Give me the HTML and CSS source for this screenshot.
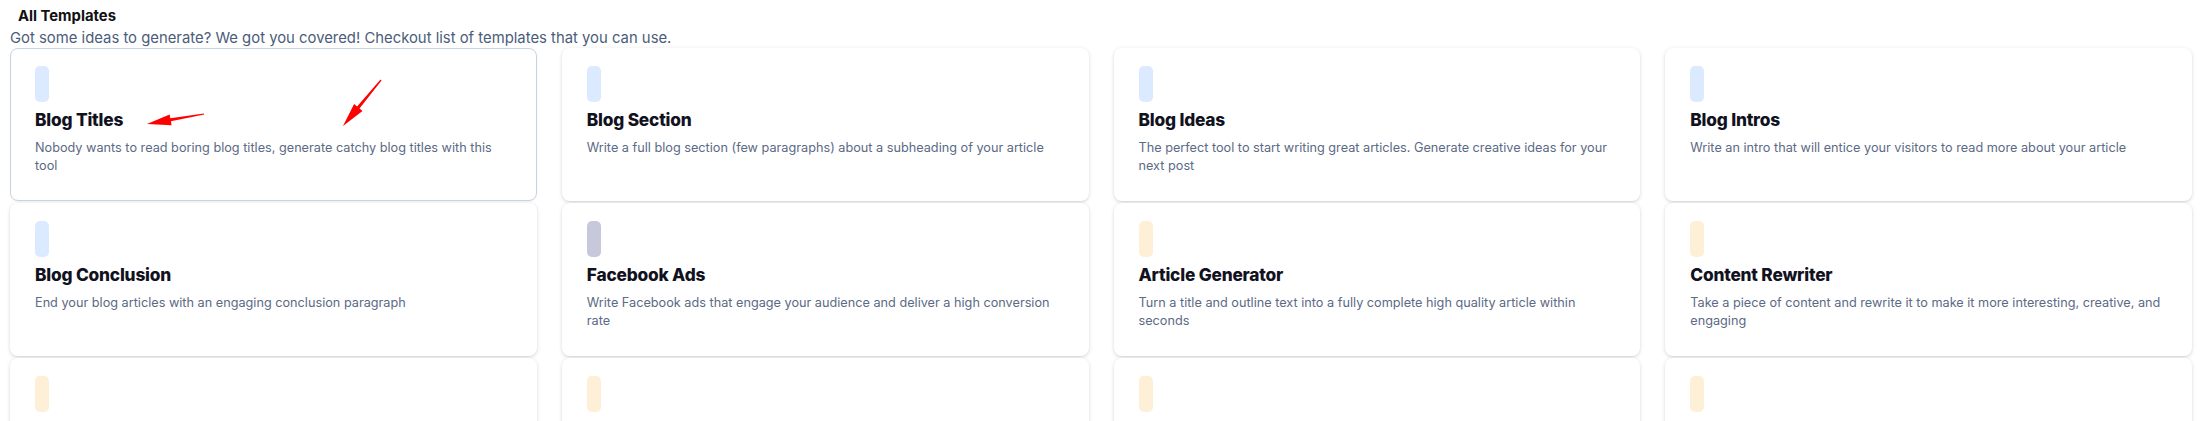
FILE: index.html
```html
<!DOCTYPE html>
<html lang="en">
<head>
  <meta charset="UTF-8">
  <meta name="viewport" content="width=device-width, initial-scale=1.0">
  <title>All Templates</title>
  <link rel="stylesheet" href="styles.css">
</head>
<body>
  <div class="templates-page">
    <h2 class="page-title">All Templates</h2>
    <p class="page-subtitle">Got some ideas to generate? We got you covered! Checkout list of templates that you can use.</p>

    <div class="template-grid">
      <a class="template-card active" href="#">
        <span class="template-icon blue"></span>
        <h3>Blog Titles</h3>
        <p>Nobody wants to read boring blog titles, generate catchy blog titles with this tool</p>
        <!-- annotation arrows -->
        <svg class="annotation" width="400" height="120" viewBox="0 0 400 120">
          <polygon points="193.9,65.4 160.3,70.3 159.6,66.4 137,76 161.6,77.2 160.9,73.3 194.1,66.6" />
          <polygon points="371.5,32.4 349.5,60.5 352.5,63.0 333,78 344.1,56.0 347.1,58.5 370.5,31.6" />
        </svg>
      </a>
      <a class="template-card" href="#">
        <span class="template-icon blue"></span>
        <h3>Blog Section</h3>
        <p>Write a full blog section (few paragraphs) about a subheading of your article</p>
      </a>
      <a class="template-card" href="#">
        <span class="template-icon blue"></span>
        <h3>Blog Ideas</h3>
        <p>The perfect tool to start writing great articles. Generate creative ideas for your next post</p>
      </a>
      <a class="template-card" href="#">
        <span class="template-icon blue"></span>
        <h3>Blog Intros</h3>
        <p>Write an intro that will entice your visitors to read more about your article</p>
      </a>

      <a class="template-card" href="#">
        <span class="template-icon blue"></span>
        <h3>Blog Conclusion</h3>
        <p>End your blog articles with an engaging conclusion paragraph</p>
      </a>
      <a class="template-card" href="#">
        <span class="template-icon slate"></span>
        <h3>Facebook Ads</h3>
        <p>Write Facebook ads that engage your audience and deliver a high conversion rate</p>
      </a>
      <a class="template-card" href="#">
        <span class="template-icon amber"></span>
        <h3>Article Generator</h3>
        <p>Turn a title and outline text into a fully complete high quality article within seconds</p>
      </a>
      <a class="template-card" href="#">
        <span class="template-icon amber"></span>
        <h3>Content Rewriter</h3>
        <p>Take a piece of content and rewrite it to make it more interesting, creative, and engaging</p>
      </a>

      <a class="template-card" href="#">
        <span class="template-icon amber"></span>
        <h3>Paragraph Writer</h3>
        <p>Generate paragraphs that will captivate your readers</p>
      </a>
      <a class="template-card" href="#">
        <span class="template-icon amber"></span>
        <h3>Content Summarizer</h3>
        <p>Get the key points from a piece of content</p>
      </a>
      <a class="template-card" href="#">
        <span class="template-icon amber"></span>
        <h3>Product Description</h3>
        <p>Create compelling product descriptions that sell</p>
      </a>
      <a class="template-card" href="#">
        <span class="template-icon amber"></span>
        <h3>Sentence Expander</h3>
        <p>Expand a short sentence into a few longer ones</p>
      </a>
    </div>
  </div>
</body>
</html>
```

FILE: styles.css
```css
html {
  overflow: hidden;
}
body {
  margin: 0;
  font-family: 'Inter', 'Noto Sans', sans-serif;
  background: #ffffff;
  color: #111827;
}
.templates-page {
  padding: 7px 17px 20px 10px;
}
.page-title {
  margin: 0 0 3px 8px;
  font-size: 14.8px;
  line-height: 18px;
  font-weight: 700;
  color: #111111;
}
.page-subtitle {
  margin: 0;
  font-size: 14.85px;
  line-height: 20px;
  color: #4b5c7a;
}
.template-grid {
  display: grid;
  grid-template-columns: repeat(4, 1fr);
  gap: 2px 25px;
}
.template-card {
  position: relative;
  display: block;
  box-sizing: border-box;
  height: 153px;
  padding: 17px 24px;
  border: 1px solid transparent;
  border-radius: 8px;
  background: #ffffff;
  box-shadow: 0 1px 4px rgba(0, 0, 0, 0.13), 0 1px 2px rgba(0, 0, 0, 0.06);
  text-decoration: none;
}
.template-card.active {
  border-color: #c9d4e2;
  box-shadow: 0 1px 2px rgba(0, 0, 0, 0.05);
}
.template-icon {
  display: block;
  width: 14px;
  height: 36px;
  border-radius: 5px;
}
.template-icon.blue { background: #dbeafe; }
.template-icon.slate { background: #c7c8da; }
.template-icon.amber { background: #fef0d6; }
.template-card h3 {
  margin: 6px 0 0;
  font-size: 17.3px;
  line-height: 24px;
  font-weight: 800;
  letter-spacing: -0.2px;
  color: #12121f;
}
.template-card p {
  margin: 7px 0 0;
  font-size: 12.7px;
  line-height: 18px;
  color: #5b6a85;
}
/* red arrows drawn over the first card */
.annotation {
  position: absolute;
  top: -1px;
  left: -1px;
  fill: #ff0000;
  pointer-events: none;
}
```
